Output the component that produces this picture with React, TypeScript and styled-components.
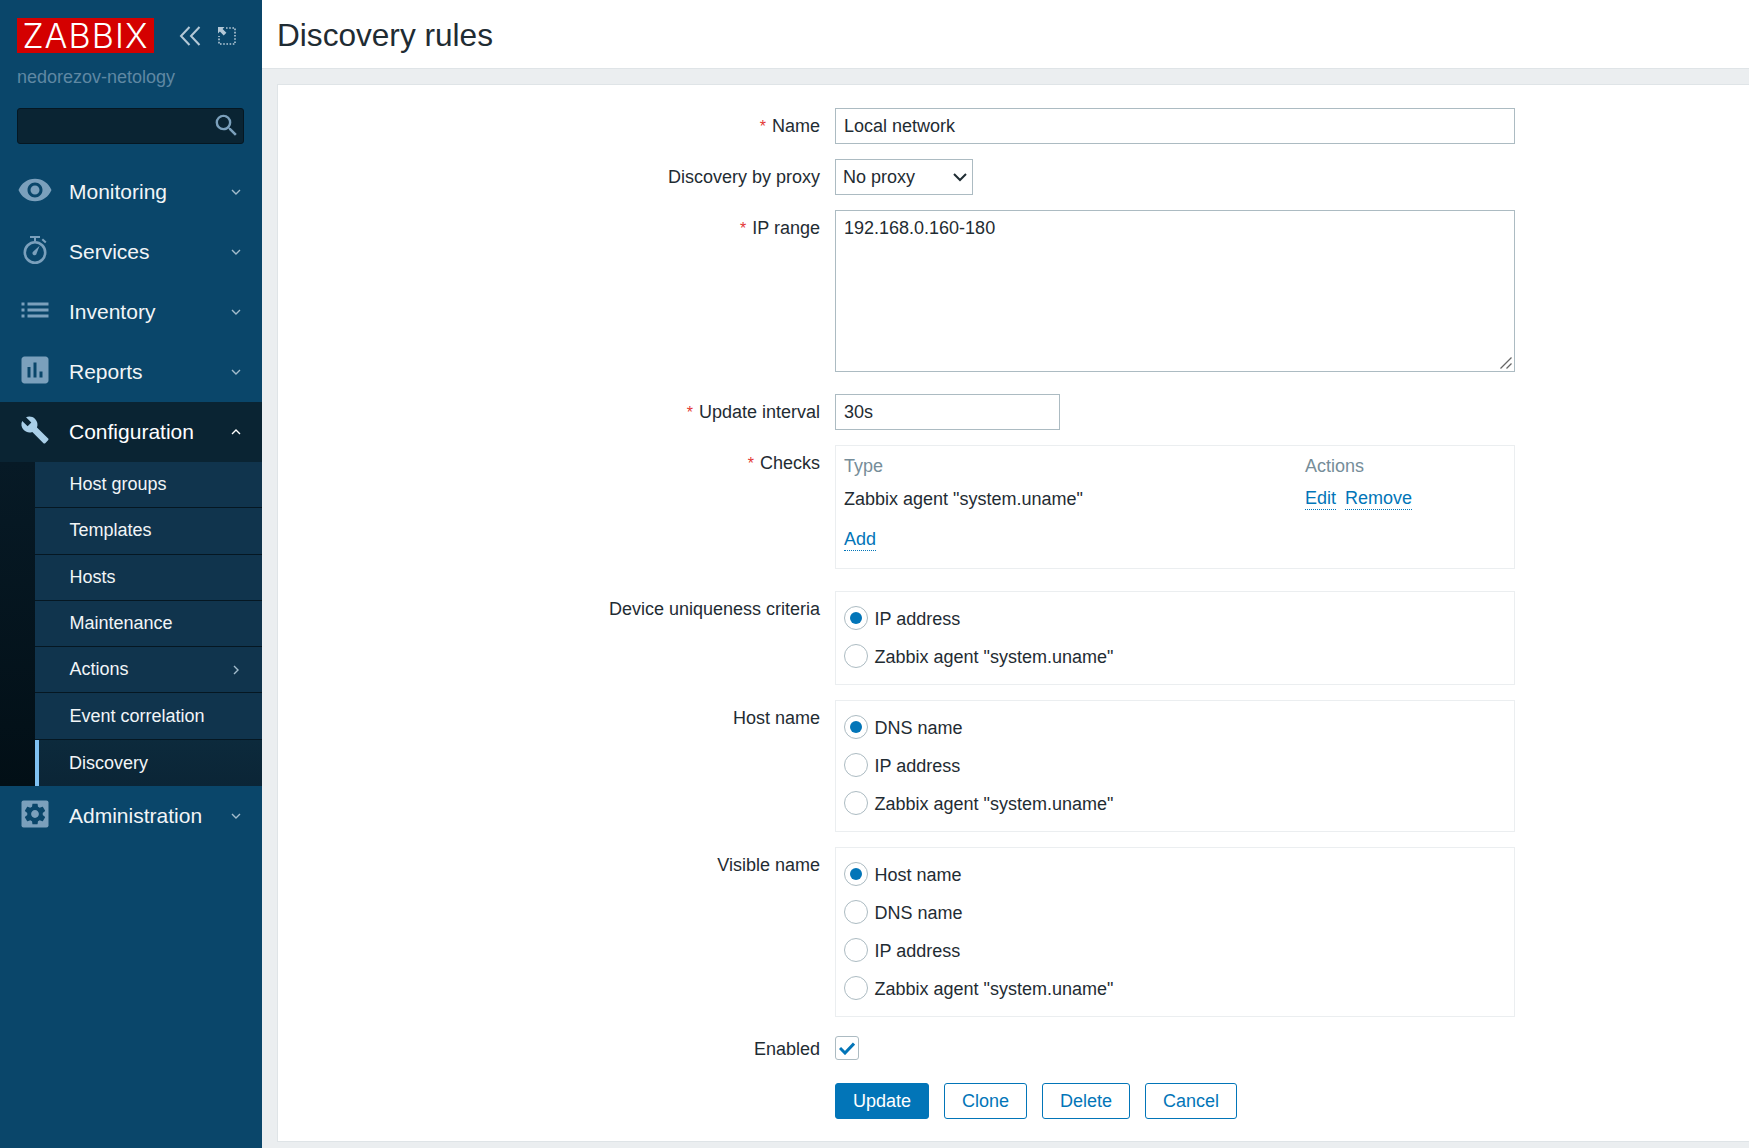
import styled, { createGlobalStyle } from "styled-components";
import { MdVisibility, MdList, MdAssessment, MdSearch } from "react-icons/md";
import type { ReactNode } from "react";

const GlobalStyle = createGlobalStyle`
  html, body {
    margin: 0;
    padding: 0;
    height: 100%;
    overflow: hidden;
    background: #ebeef0;
    font-family: "Liberation Sans", Arial, sans-serif;
  }
  * { box-sizing: border-box; }
`;

const Page = styled.div`
  display: flex;
  width: 1749px;
  height: 1148px;
`;

const Sidebar = styled.aside`
  width: 262px;
  flex: none;
  background: #0a466a;
  display: flex;
  flex-direction: column;
`;

const Brand = styled.div`
  display: flex;
  align-items: center;
  padding: 18px 0 0 17px;
`;

const Logo = styled.div`
  width: 137px;
  height: 35px;
  background: #d40000;
  color: #fff;
  font-family: Inter, "Liberation Sans", sans-serif;
  font-weight: 300;
  font-size: 34px;
  line-height: 35px;
  letter-spacing: 1.1px;
  text-align: center;
  white-space: nowrap;
`;

const BrandIcons = styled.div`
  display: flex;
  align-items: center;
  gap: 17px;
  margin-left: 25px;
`;

const ServerName = styled.div`
  margin: 12px 0 0 17px;
  color: #5f88a3;
  font-size: 18px;
  line-height: 24px;
`;

const SearchBox = styled.div`
  position: relative;
  width: 227px;
  height: 36px;
  margin: 19px 0 18px 17px;
  background: #0a2433;
  border: 1px solid #051722;
  border-radius: 3px;

  svg {
    position: absolute;
    right: 2px;
    top: 2px;
    color: #7ba0bc;
  }
`;

const MenuRow = styled.div<{ $open?: boolean }>`
  display: flex;
  align-items: center;
  height: 60px;
  padding: 0 21px 0 17px;
  background: ${(p) => (p.$open ? "#0a2433" : "transparent")};
  color: ${(p) => (p.$open ? "#fff" : "#f2f5f7")};
  font-size: 21px;

  > svg:first-child {
    color: ${(p) => (p.$open ? "#a9cfe8" : "#7ba0bc")};
    flex: none;
    margin-top: -4px;
  }
`;

const MenuLabel = styled.span`
  flex: 1;
  margin-left: 16px;
`;

const SubMenu = styled.div`
  display: flex;
  flex-direction: column;
  padding-left: 35px;
  background: linear-gradient(#071a26, #020f16);
`;

const SubItem = styled.div<{ $active?: boolean }>`
  display: flex;
  align-items: center;
  height: 46.3px;
  padding: ${(p) => (p.$active ? "2px" : "0")} 21px 0 ${(p) => (p.$active ? "30px" : "34.5px")};
  background: ${(p) => (p.$active ? "linear-gradient(#0c2a3c, #0b2536)" : "#10344d")};
  border-left: ${(p) => (p.$active ? "4px solid #7fc1f2" : "none")};
  border-bottom: ${(p) => (p.$active ? "none" : "1.5px solid #051722")};
  color: #f2f5f7;
  font-size: 18px;

  span { flex: 1; }
`;

const Main = styled.main`
  flex: 1;
  display: flex;
  flex-direction: column;
  min-width: 0;
`;

const Header = styled.header`
  height: 69px;
  flex: none;
  padding: 3px 0 0 15px;
  background: #fff;
  border-bottom: 1px solid #dfe4e7;
  display: flex;
  align-items: center;
`;

const Title = styled.h1`
  margin: 0;
  font-size: 31.6px;
  font-weight: 400;
  color: #1f2c33;
`;

const Card = styled.section`
  height: 1058px;
  margin: 15px 0 0 15px;
  padding-top: 23px;
  background: #fff;
  border: 1px solid #dfe4e7;
  border-right: none;
`;

const Row = styled.div<{ $top?: number }>`
  display: grid;
  grid-template-columns: 542px 680px;
  column-gap: 15px;
  margin-top: ${(p) => p.$top ?? 15}px;
  color: #1f2c33;
  font-size: 18px;
`;

const Label = styled.label<{ $inline?: boolean }>`
  text-align: right;
  line-height: ${(p) => (p.$inline ? "24px" : "34px")};
  padding-top: 1px;
  color: #1f2c33;
`;

const Required = styled.span`
  color: #e33734;
  font-size: 16px;
  line-height: 1;
  margin-right: 6px;
`;

const TextInput = styled.input<{ $width?: number }>`
  display: block;
  width: ${(p) => (p.$width ? `${p.$width}px` : "100%")};
  height: 36px;
  padding: 0 8px;
  border: 1px solid #acbbc2;
  border-radius: 0;
  outline: none;
  background: #fff;
  color: #1f2c33;
  font: 18px "Liberation Sans", Arial, sans-serif;
`;

const SelectWrap = styled.div`
  position: relative;
  width: 138px;
  height: 36px;

  svg {
    position: absolute;
    right: 6px;
    top: 14px;
    pointer-events: none;
  }
`;

const Select = styled.select`
  appearance: none;
  width: 100%;
  height: 100%;
  padding: 0 7px;
  border: 1px solid #acbbc2;
  border-radius: 0;
  outline: none;
  background: #fff;
  color: #1f2c33;
  font: 18px "Liberation Sans", Arial, sans-serif;
`;

const TextAreaWrap = styled.div`
  position: relative;
  height: 162px;

  svg {
    position: absolute;
    right: 3px;
    bottom: 3px;
    pointer-events: none;
  }
`;

const TextArea = styled.textarea`
  display: block;
  width: 100%;
  height: 100%;
  padding: 7px 8px;
  border: 1px solid #acbbc2;
  border-radius: 0;
  outline: none;
  resize: none;
  color: #1f2c33;
  font: 18px "Liberation Sans", Arial, sans-serif;
`;

const Box = styled.div`
  border: 1px solid #ebeef0;
  padding: 8px;
`;

const ChecksBox = styled(Box)`
  height: 124px;
  display: grid;
  grid-template-columns: 461px 1fr;
  grid-template-rows: 33px 33px 48px;
  align-items: center;
  padding: 3px 8px;
  line-height: 22px;
`;

const ColHead = styled.span`
  color: #768d99;
`;

const Links = styled.div`
  display: flex;
  gap: 9px;
`;

const Link = styled.a`
  color: #0275b8;
  border-bottom: 1px dotted #0275b8;
  line-height: 22px;
`;

const RadioRow = styled.label`
  display: flex;
  align-items: center;
  height: 38px;
  gap: 6.5px;
  color: #1f2c33;
`;

const RadioMark = styled.span<{ $checked?: boolean }>`
  width: 24px;
  height: 24px;
  flex: none;
  margin-top: -2px;
  border: 1px solid #acbbc2;
  border-radius: 50%;
  display: flex;
  align-items: center;
  justify-content: center;

  &::after {
    content: "";
    width: 12px;
    height: 12px;
    border-radius: 50%;
    background: ${(p) => (p.$checked ? "#0275b8" : "transparent")};
  }
`;

const CheckMark = styled.span`
  display: flex;
  align-items: center;
  justify-content: center;
  width: 24px;
  height: 24px;
  border: 1px solid #acbbc2;
  border-radius: 3px;
`;

const Actions = styled.div`
  display: flex;
  gap: 15px;
  grid-column: 2;
`;

const Button = styled.button<{ $primary?: boolean; $width: number }>`
  width: ${(p) => p.$width}px;
  height: 36px;
  border: 1px solid #0275b8;
  border-radius: 3px;
  background: ${(p) => (p.$primary ? "#0275b8" : "#fff")};
  color: ${(p) => (p.$primary ? "#fff" : "#0275b8")};
  font: 18px "Liberation Sans", Arial, sans-serif;
  padding: 0;
`;

function Chevron({ dir }: { dir: "down" | "up" | "right" }) {
  const d = dir === "down" ? "M1 1l4 4 4-4" : dir === "up" ? "M1 5l4-4 4 4" : "M3 -1l4 4-4 4";
  return (
    <svg width="10" height="6" viewBox="0 0 10 6" overflow="visible" fill="none" stroke={dir === "up" ? "#fff" : "#a3bccc"} strokeWidth="1.4">
      <path d={d} />
    </svg>
  );
}

function StopwatchIcon() {
  return (
    <svg width="36" height="36" viewBox="0 0 36 36">
      <circle cx="18" cy="20.5" r="10.2" fill="none" stroke="currentColor" strokeWidth="2.6" />
      <path fill="currentColor" d="M13 4h10v2h-4v3h-2V6h-4zM26 6.5l3.5 3.2-1.4 1.5-3.5-3.2zM22.6 13.8l-3 7.6a2.1 2.1 0 1 1-3.3-1.9z" />
    </svg>
  );
}

function GearBox() {
  return (
    <svg width="36" height="36" viewBox="0 0 24 24">
      <rect x="3" y="3" width="18" height="18" rx="1.4" fill="#7ba0bc" />
      <path
        transform="translate(12 12) scale(0.72) translate(-12 -12)"
        fill="#0a466a"
        fillRule="evenodd"
        d="M19.14,12.94c0.04-0.3,0.06-0.61,0.06-0.94c0-0.32-0.02-0.64-0.07-0.94l2.03-1.58c0.18-0.14,0.23-0.41,0.12-0.61 l-1.92-3.32c-0.12-0.22-0.37-0.29-0.59-0.22l-2.39,0.96c-0.5-0.38-1.03-0.7-1.62-0.94L14.4,2.81c-0.04-0.24-0.24-0.41-0.48-0.41 h-3.84c-0.24,0-0.43,0.17-0.47,0.41L9.25,5.35C8.66,5.59,8.12,5.92,7.63,6.29L5.24,5.33c-0.22-0.08-0.47,0-0.59,0.22L2.74,8.87 C2.62,9.08,2.66,9.34,2.86,9.48l2.03,1.58C4.84,11.36,4.8,11.69,4.8,12s0.02,0.64,0.07,0.94l-2.03,1.58 c-0.18,0.14-0.23,0.41-0.12,0.61l1.92,3.32c0.12,0.22,0.37,0.29,0.59,0.22l2.39-0.96c0.5,0.38,1.03,0.7,1.62,0.94l0.36,2.54 c0.05,0.24,0.24,0.41,0.48,0.41h3.84c0.24,0,0.44-0.17,0.47-0.41l0.36-2.54c0.59-0.24,1.13-0.56,1.62-0.94l2.39,0.96 c0.22,0.08,0.47,0,0.59-0.22l1.92-3.32c0.12-0.22,0.07-0.47-0.12-0.61L19.14,12.94z M12,15.6c-1.98,0-3.6-1.62-3.6-3.6 s1.62-3.6,3.6-3.6s3.6,1.62,3.6,3.6S13.98,15.6,12,15.6z"
      />
    </svg>
  );
}

function WrenchIcon() {
  return (
    <svg width="36" height="36" viewBox="0 0 24 24" fill="currentColor">
      <path transform="translate(12 12) scale(0.82) translate(-12 -12)" d="M22.7 19l-9.1-9.1c.9-2.3.4-5-1.5-6.9-2-2-5-2.4-7.4-1.3L9 6 6 9 1.6 4.7C.4 7.1.9 10.1 2.9 12.1c1.9 1.9 4.6 2.4 6.9 1.5l9.1 9.1c.4.4 1 .4 1.4 0l2.3-2.3c.5-.4.5-1.1.1-1.4z" />
    </svg>
  );
}

function CollapseIcon() {
  return (
    <svg width="22" height="20" viewBox="0 0 22 20" fill="none" stroke="#b4c8d6" strokeWidth="2">
      <path d="M10.5 1L2 10l8.5 9M20.5 1L12 10l8.5 9" />
    </svg>
  );
}

function KioskIcon() {
  return (
    <svg width="18" height="18" viewBox="0 0 18 18" fill="none">
      <path d="M8 1h9v16H1V9" stroke="#b4c8d6" strokeWidth="1.6" strokeDasharray="1.6 1.6" />
      <path d="M0 0h6.5L4.6 1.9 8.4 5.7 5.7 8.4 1.9 4.6 0 6.5z" fill="#b4c8d6" />
    </svg>
  );
}

const menuTop: { label: string; icon: ReactNode }[] = [
  { label: "Monitoring", icon: <MdVisibility size={36} /> },
  { label: "Services", icon: <StopwatchIcon /> },
  { label: "Inventory", icon: <MdList size={36} /> },
  { label: "Reports", icon: <MdAssessment size={36} /> },
];

const subItems = ["Host groups", "Templates", "Hosts", "Maintenance", "Actions", "Event correlation"];

function RadioGroup({ options, selected }: { options: string[]; selected: string }) {
  return (
    <Box>
      {options.map((o) => (
        <RadioRow key={o}>
          <RadioMark $checked={o === selected} />
          {o}
        </RadioRow>
      ))}
    </Box>
  );
}

const AGENT = 'Zabbix agent "system.uname"';

export default function App() {
  return (
    <Page>
      <GlobalStyle />
      <Sidebar>
        <Brand>
          <Logo>ZABBIX</Logo>
          <BrandIcons>
            <CollapseIcon />
            <KioskIcon />
          </BrandIcons>
        </Brand>
        <ServerName>nedorezov-netology</ServerName>
        <SearchBox>
          <MdSearch size={29} />
        </SearchBox>
        {menuTop.map((m) => (
          <MenuRow key={m.label}>
            {m.icon}
            <MenuLabel>{m.label}</MenuLabel>
            <Chevron dir="down" />
          </MenuRow>
        ))}
        <MenuRow $open>
          <WrenchIcon />
          <MenuLabel>Configuration</MenuLabel>
          <Chevron dir="up" />
        </MenuRow>
        <SubMenu>
          {subItems.map((s) => (
            <SubItem key={s}>
              <span>{s}</span>
              {s === "Actions" && <Chevron dir="right" />}
            </SubItem>
          ))}
          <SubItem $active>
            <span>Discovery</span>
          </SubItem>
        </SubMenu>
        <MenuRow>
          <GearBox />
          <MenuLabel>Administration</MenuLabel>
          <Chevron dir="down" />
        </MenuRow>
      </Sidebar>

      <Main>
        <Header>
          <Title>Discovery rules</Title>
        </Header>
        <Card>
          <Row $top={0}>
            <Label><Required>*</Required>Name</Label>
            <TextInput readOnly value="Local network" />
          </Row>
          <Row>
            <Label>Discovery by proxy</Label>
            <SelectWrap>
              <Select defaultValue="0">
                <option value="0">No proxy</option>
              </Select>
              <svg width="14" height="9" viewBox="0 0 14 9" fill="none" stroke="#1f2c33" strokeWidth="2">
                <path d="M1 1l6 6 6-6" />
              </svg>
            </SelectWrap>
          </Row>
          <Row>
            <Label><Required>*</Required>IP range</Label>
            <TextAreaWrap>
              <TextArea readOnly value="192.168.0.160-180" />
              <svg width="12" height="12" viewBox="0 0 12 12" fill="none" stroke="#666" strokeWidth="1.3">
                <path d="M0.5 11.5L11.5 0.5M6.5 11.5L11.5 6.5" />
              </svg>
            </TextAreaWrap>
          </Row>
          <Row $top={22}>
            <Label><Required>*</Required>Update interval</Label>
            <TextInput readOnly value="30s" $width={225} />
          </Row>
          <Row>
            <Label><Required>*</Required>Checks</Label>
            <ChecksBox>
              <ColHead>Type</ColHead>
              <ColHead>Actions</ColHead>
              <span>{AGENT}</span>
              <Links>
                <Link>Edit</Link>
                <Link>Remove</Link>
              </Links>
              <Links>
                <Link>Add</Link>
              </Links>
            </ChecksBox>
          </Row>
          <Row $top={22}>
            <Label>Device uniqueness criteria</Label>
            <RadioGroup options={["IP address", AGENT]} selected="IP address" />
          </Row>
          <Row>
            <Label>Host name</Label>
            <RadioGroup options={["DNS name", "IP address", AGENT]} selected="DNS name" />
          </Row>
          <Row>
            <Label>Visible name</Label>
            <RadioGroup options={["Host name", "DNS name", "IP address", AGENT]} selected="Host name" />
          </Row>
          <Row $top={19}>
            <Label $inline>Enabled</Label>
            <div>
              <CheckMark>
                <svg width="16" height="13" viewBox="0 0 16 13" fill="none" stroke="#0275b8" strokeWidth="3">
                  <path d="M1 6l5 5 9-9.5" />
                </svg>
              </CheckMark>
            </div>
          </Row>
          <Row $top={22}>
            <Actions>
              <Button $primary $width={94}>Update</Button>
              <Button $width={83}>Clone</Button>
              <Button $width={88}>Delete</Button>
              <Button $width={92}>Cancel</Button>
            </Actions>
          </Row>
        </Card>
      </Main>
    </Page>
  );
}
